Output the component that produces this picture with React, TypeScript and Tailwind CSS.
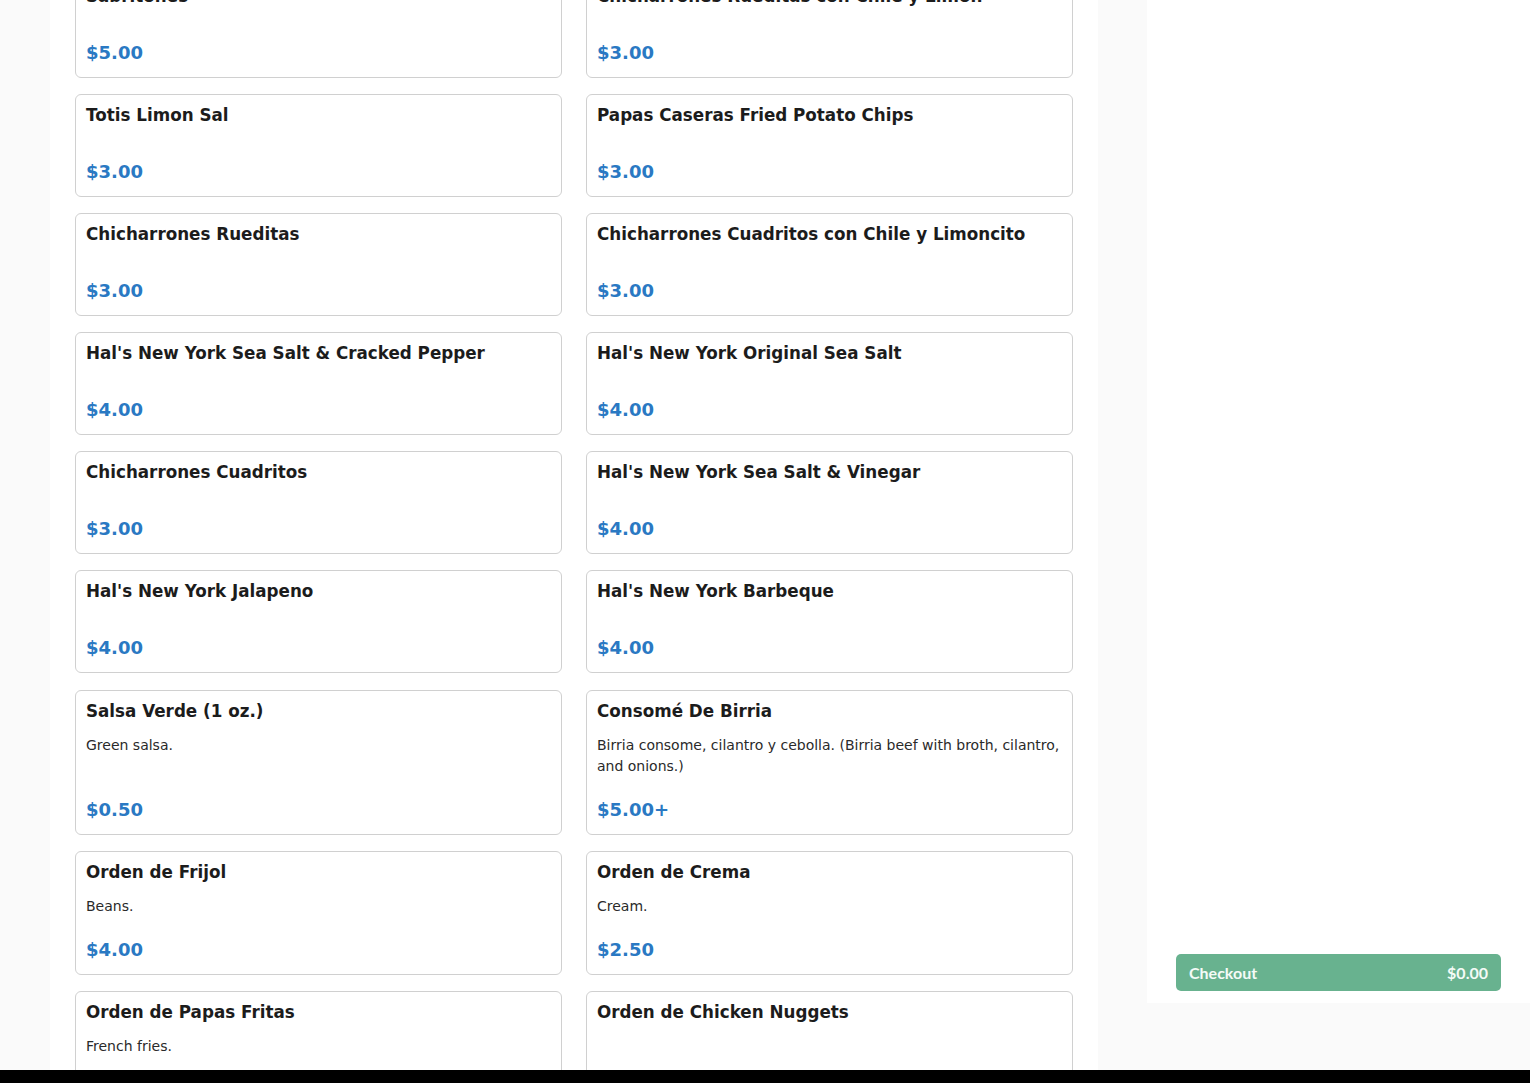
import React from "react";

type Item = { name: string; desc?: string; price: string };

const rows: [Item, Item][] = [
  [
    { name: "Sabritones", price: "$5.00" },
    { name: "Chicharrones Rueditas con Chile y Limon", price: "$3.00" },
  ],
  [
    { name: "Totis Limon Sal", price: "$3.00" },
    { name: "Papas Caseras Fried Potato Chips", price: "$3.00" },
  ],
  [
    { name: "Chicharrones Rueditas", price: "$3.00" },
    { name: "Chicharrones Cuadritos con Chile y Limoncito", price: "$3.00" },
  ],
  [
    { name: "Hal's New York Sea Salt & Cracked Pepper", price: "$4.00" },
    { name: "Hal's New York Original Sea Salt", price: "$4.00" },
  ],
  [
    { name: "Chicharrones Cuadritos", price: "$3.00" },
    { name: "Hal's New York Sea Salt & Vinegar", price: "$4.00" },
  ],
  [
    { name: "Hal's New York Jalapeno", price: "$4.00" },
    { name: "Hal's New York Barbeque", price: "$4.00" },
  ],
  [
    { name: "Salsa Verde (1 oz.)", desc: "Green salsa.", price: "$0.50" },
    {
      name: "Consomé De Birria",
      desc: "Birria consome, cilantro y cebolla. (Birria beef with broth, cilantro, and onions.)",
      price: "$5.00+",
    },
  ],
  [
    { name: "Orden de Frijol", desc: "Beans.", price: "$4.00" },
    { name: "Orden de Crema", desc: "Cream.", price: "$2.50" },
  ],
  [
    { name: "Orden de Papas Fritas", desc: "French fries.", price: "$4.00" },
    { name: "Orden de Chicken Nuggets", price: "$6.00" },
  ],
];

function Card({ item }: { item: Item }) {
  return (
    <div className="flex flex-col rounded-[6px] border border-[#d0d0d0] bg-white px-[10px] pt-[10px] pb-[11px]">
      <div className="text-[16.75px] font-bold leading-[20px] text-[#1c1c1c]">{item.name}</div>
      <div className="mt-[14px] text-[14px] leading-[21px] text-[#2a2a2a]">{item.desc}</div>
      <div className="min-h-[19px] flex-1" />
      <div className="text-[18px] font-bold leading-[27px] text-[#2a79c3]">{item.price}</div>
    </div>
  );
}

export default function App() {
  return (
    <div className="flex h-[1083px] flex-col overflow-hidden bg-[#fafafa]" style={{ fontFamily: '"DejaVu Sans", sans-serif' }}>
      <div className="flex h-[1070px] overflow-hidden">
        <div className="ml-[50px] w-[1048px] shrink-0 bg-white px-[25px]">
          <div className="-mt-[25px] grid grid-cols-2 gap-x-[24px] gap-y-[16.1px]">
            {rows.map((r, i) => (
              <React.Fragment key={i}>
                <Card item={r[0]} />
                <Card item={r[1]} />
              </React.Fragment>
            ))}
          </div>
        </div>
        <div className="ml-[49px] flex h-[1003px] flex-1 flex-col justify-end bg-white px-[29px] pb-[12px]">
          <div
            className="flex h-[37px] items-center justify-between rounded-[5px] bg-[#68b28f] px-[13px] text-[16px] font-bold text-[#f4fbf7]"
            style={{ fontFamily: 'Lato, "Open Sans", sans-serif' }}
          >
            <span>Checkout</span>
            <span>$0.00</span>
          </div>
        </div>
      </div>
      <div className="h-[13px] bg-black" />
    </div>
  );
}
